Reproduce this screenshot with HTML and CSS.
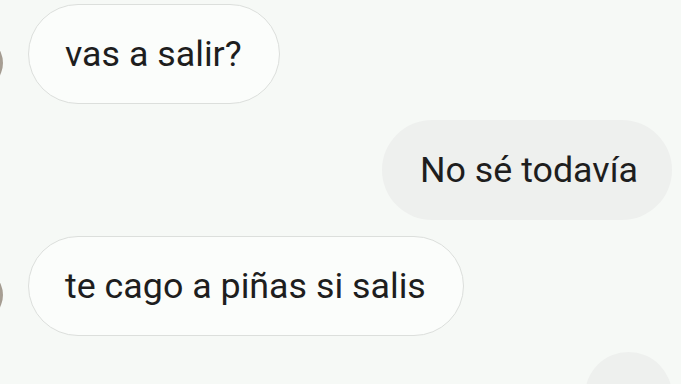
FILE: index.html
```html
<!DOCTYPE html>
<html lang="es">
<head>
<meta charset="UTF-8" />
<meta name="viewport" content="width=device-width, initial-scale=1" />
<title>Chat</title>
<link rel="stylesheet" href="styles.css">
</head>
<body>
  <main class="chat">
    <div class="row in">
      <span class="avatar" aria-hidden="true"></span>
      <div class="bubble">vas a salir?</div>
    </div>
    <div class="row out">
      <div class="bubble">No sé todavía</div>
    </div>
    <div class="row in">
      <span class="avatar" aria-hidden="true"></span>
      <div class="bubble">te cago a piñas si salis</div>
    </div>
    <div class="row out">
      <div class="bubble small"></div>
    </div>
  </main>
</body>
</html>
```

FILE: styles.css
```css
body {
  margin: 0;
  background: #f6f9f6;
  font-family: Roboto, 'Noto Sans', sans-serif;
  color: #1e1e1e;
}
.chat {
  display: flex;
  flex-direction: column;
  gap: 16px;
  height: 384px;
  overflow: hidden;
  box-sizing: border-box;
  padding: 4px 9px 0 0;
}
.row {
  display: flex;
  align-items: center;
  flex: none;
}
.row.out {
  justify-content: flex-end;
}
.avatar {
  width: 52px;
  height: 52px;
  flex: none;
  border-radius: 50%;
  background: radial-gradient(circle at 85% 50%, #7a6a58 0%, #4a3d32 70%);
  margin-left: -49px;
  margin-right: 25px;
  margin-top: 18px;
  opacity: 0.6;
}
.bubble {
  box-sizing: border-box;
  height: 100px;
  display: flex;
  align-items: center;
  padding: 0 37px 0 36px;
  border-radius: 50px;
  font-size: 35.8px;
  white-space: nowrap;
}
.in .bubble {
  background: #fbfdfb;
  border: 1px solid #dcdfdc;
}
.out .bubble {
  background: #eef0ee;
  padding: 0 34px 0 38px;
}
.bubble.small {
  width: 87px;
}
```
